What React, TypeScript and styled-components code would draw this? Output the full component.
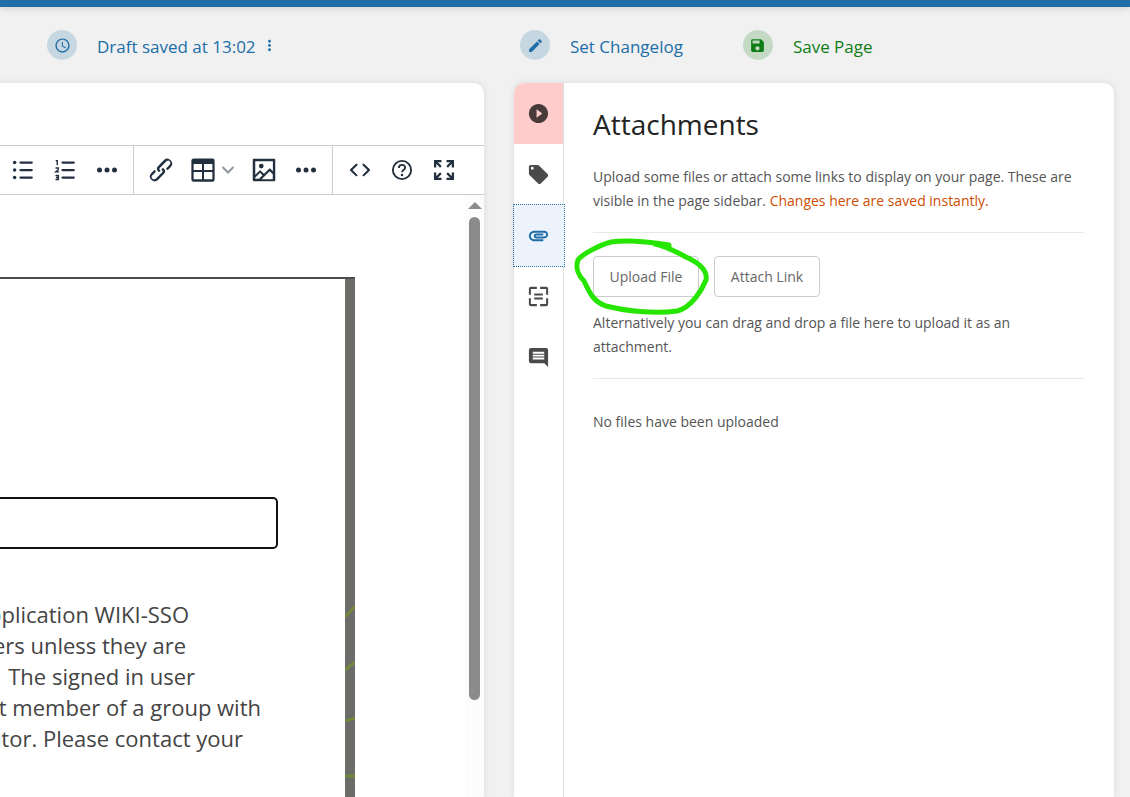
import React from "react";
import styled, { createGlobalStyle, css } from "styled-components";
import {
  MdSchedule,
  MdEdit,
  MdSave,
  MdMoreVert,
  MdPlayCircleFilled,
  MdLocalOffer,
  MdAttachment,
  MdComment,
} from "react-icons/md";

const GlobalStyle = createGlobalStyle`
  *, *::before, *::after { box-sizing: border-box; }
  body {
    margin: 0;
    background: #f1f1f1;
    color: #555;
    font-family: "Open Sans", "Noto Sans", sans-serif;
    font-size: 14px;
    line-height: 24px;
  }
  button, input { font: inherit; color: inherit; }
  button { background: none; border: 0; padding: 0; cursor: pointer; }
`;

const Page = styled.div`
  min-height: 100vh;
  display: flex;
  flex-direction: column;
  overflow: hidden;
`;

const TopBar = styled.header`
  height: 7px;
  flex: none;
  background: #206ea7;
  box-shadow: 0 0 8px rgba(0, 0, 0, 0.2);
`;

const columns = css`
  display: grid;
  grid-template-columns: minmax(0, 1fr) 600px;
  column-gap: 30px;
  padding-right: 16px;
`;

const ActionBar = styled.div`
  ${columns}
  height: 76px;
  flex: none;
`;

const ActionGroup = styled.div<{ $inset: number }>`
  display: flex;
  align-items: center;
  gap: 60px;
  padding-left: ${(p) => p.$inset}px;
`;

const Draft = styled.div`
  display: flex;
  align-items: center;
  gap: 4px;
`;

const Action = styled.button<{ $tone: "blue" | "green" }>`
  display: flex;
  align-items: center;
  gap: 20px;
  font-size: 17px;
  white-space: nowrap;
  color: ${(p) => (p.$tone === "blue" ? "#206ea7" : "#0f7d15")};
`;

const ActionLabel = styled.span`
  padding-top: 3px;
`;

const Bubble = styled.span<{ $tone: "blue" | "green" }>`
  display: grid;
  place-items: center;
  width: 30px;
  height: 30px;
  border-radius: 50%;
  background: ${(p) => (p.$tone === "blue" ? "#c7d7e2" : "#c4dac5")};
`;

const MoreButton = styled.button`
  display: grid;
  place-items: center;
  width: 20px;
  height: 24px;
  color: #206ea7;
`;

const Workspace = styled.main`
  ${columns}
  flex: 1;
`;

const Editor = styled.section`
  display: flex;
  flex-direction: column;
  background: #fff;
  border-top-right-radius: 10px;
  box-shadow: 0 0 7px rgba(0, 0, 0, 0.1);
`;

const TitleInput = styled.input`
  height: 62px;
  width: 100%;
  border: 0;
  outline: 0;
  padding: 0 20px;
  background: transparent;
  font-size: 28px;
`;

const Toolbar = styled.div`
  display: flex;
  height: 50px;
  border-top: 1px solid #ccc;
  border-bottom: 1px solid #ccc;
`;

const ToolGroup = styled.div<{ $first?: boolean; $last?: boolean }>`
  display: flex;
  align-items: center;
  padding: 0 5px 0 ${(p) => (p.$first ? 2 : 6)}px;
  border-right: ${(p) => (p.$last ? "0" : "1px solid #ccc")};
`;

const Tool = styled.button`
  display: grid;
  place-items: center;
  width: 42px;
  height: 42px;
  color: #222f3e;
`;

const ToolArrow = styled.button`
  display: grid;
  place-items: center start;
  width: 22px;
  height: 42px;
  margin-left: -3px;
  color: #8f969f;
`;

const EditArea = styled.div`
  flex: 1;
  display: flex;
`;

const Canvas = styled.div`
  flex: 1;
  min-width: 0;
  display: flex;
  padding-top: 82px;
`;

const Shot = styled.div`
  width: 355px;
  display: flex;
  border-top: 2px solid #4b4b4b;
`;

const Dialog = styled.div`
  flex: 1;
  min-width: 0;
  padding-top: 218px;
`;

const Field = styled.div`
  width: 278px;
  height: 52px;
  border: 2px solid #111;
  border-left: 0;
  border-radius: 0 5px 5px 0;
`;

const Message = styled.div`
  margin-top: 50px;
  font-size: 22px;
  line-height: 31px;
  color: #444;
`;

const Line = styled.div<{ $end: number }>`
  width: ${(p) => p.$end}px;
  display: flex;
  justify-content: flex-end;
  overflow: hidden;
  white-space: nowrap;
`;

const Backdrop = styled.div`
  width: 10px;
  background: #6c6c6a;
  overflow: hidden;
  padding-top: 321px;
`;

const Scrollbar = styled.div`
  width: 19px;
  display: flex;
  flex-direction: column;
  align-items: center;
  gap: 8px;
  padding-top: 7px;
  background: #fcfcfc;
`;

const ScrollArrow = styled.div`
  border: 7px solid transparent;
  border-top: 0;
  border-bottom: 7px solid #8b8b8b;
`;

const Thumb = styled.div`
  width: 11px;
  height: 483px;
  border-radius: 6px;
  background: #8b8b8b;
`;

const Sidebar = styled.aside`
  display: flex;
  background: #fff;
  border-radius: 10px 10px 0 0;
  box-shadow: 0 0 7px rgba(0, 0, 0, 0.1);
`;

const Tabs = styled.nav`
  width: 50px;
  flex: none;
  border-right: 1px solid #ddd;
`;

const Tab = styled.button<{ $kind?: "toggle" | "active" }>`
  display: grid;
  place-items: center;
  width: 49px;
  height: 61px;
  color: #4a4a4a;
  ${(p) =>
    p.$kind === "toggle" &&
    css`
      background: #ffcccc;
      color: #4a3b3b;
      border-top-left-radius: 10px;
    `}
  ${(p) =>
    p.$kind === "active" &&
    css`
      background: #edf3fa;
      color: #206ea7;
      outline: 1px dotted #206ea7;
      width: 50px;
      padding-right: 1px;
    `}
`;

const Panel = styled.div`
  flex: 1;
  min-width: 0;
  padding: 23px 30px 30px 29px;
`;

const Heading = styled.h1`
  margin: 0 0 23px;
  font-size: 28px;
  line-height: 36px;
  font-weight: 400;
  color: #222;
`;

const Text = styled.p`
  margin: 0;
`;

const Warning = styled.span`
  color: #cf4d03;
`;

const Rule = styled.hr<{ $roomy?: boolean }>`
  margin: 19px 0 ${(p) => (p.$roomy ? 31 : 23)}px;
  border: 0;
  border-top: 1px solid #e8e8e8;
`;

const Buttons = styled.div`
  position: relative;
  display: flex;
  gap: 15px;
  margin-bottom: 14px;
`;

const OutlineButton = styled.button`
  width: 106px;
  height: 41px;
  border: 1px solid #ccc;
  border-radius: 4px;
  color: #666;
  white-space: nowrap;
`;

const Scribble = styled.svg`
  position: absolute;
  left: -23px;
  top: -22px;
  pointer-events: none;
`;

const Glyph = ({ children, size = 30 }: { children: React.ReactNode; size?: number }) => (
  <svg width={size} height={size} viewBox="0 0 24 24" fill="currentColor" fillRule="evenodd" aria-hidden="true">
    {children}
  </svg>
);

const BulletIcon = () => (
  <Glyph>
    <path d="M10 6h9M10 12h9M10 18h9" stroke="currentColor" strokeWidth="1.8" strokeLinecap="round" />
    <circle cx="5.3" cy="6" r="1.4" />
    <circle cx="5.3" cy="12" r="1.4" />
    <circle cx="5.3" cy="18" r="1.4" />
  </Glyph>
);

const NumberIcon = () => (
  <Glyph>
    <path d="M10 6h9M10 12h9M10 18h9" stroke="currentColor" strokeWidth="1.8" strokeLinecap="round" />
    <path
      d="M4.6 4.6h1.2v3.6M4.4 10.4h2.2v1.4l-2 1.6h2.4M4.4 16.4h2.3v3.2H4.4M4.8 18h1.8"
      fill="none"
      stroke="currentColor"
      strokeWidth="1.1"
    />
  </Glyph>
);

const DotsIcon = () => (
  <Glyph>
    <circle cx="6" cy="12" r="2" />
    <circle cx="12" cy="12" r="2" />
    <circle cx="18" cy="12" r="2" />
  </Glyph>
);

const LinkIcon = () => (
  <Glyph>
    <path d="M6.2 12.3a1 1 0 0 1 1.4 1.4l-2 2a2 2 0 1 0 2.6 2.8l4.8-4.8a1 1 0 0 0 0-1.4 1 1 0 1 1 1.4-1.3 2.9 2.9 0 0 1 0 4L9.6 20a3.9 3.9 0 0 1-5.5-5.5l2-2Zm11.6-.6a1 1 0 0 1-1.4-1.4l2-2a2 2 0 1 0-2.6-2.8L11 10.3a1 1 0 0 0 0 1.4A1 1 0 1 1 9.6 13a2.9 2.9 0 0 1 0-4L14.4 4a3.9 3.9 0 0 1 5.5 5.5l-2 2Z" />
  </Glyph>
);

const TableIcon = () => (
  <Glyph>
    <path d="M4.5 2.8h15a1.8 1.8 0 0 1 1.8 1.8v14.9a1.8 1.8 0 0 1-1.8 1.8h-15a1.8 1.8 0 0 1-1.8-1.8V4.6a1.8 1.8 0 0 1 1.8-1.8ZM4.5 7.1v4.8h6.7V7.1Zm8.300 0v4.8h6.7V7.1ZM4.5 13.500v5.9h6.7v-5.9Zm8.300 0v5.9h6.7v-5.9Z" />
  </Glyph>
);

const ChevronIcon = () => (
  <svg width="14" height="14" viewBox="0 0 14 14" fill="none" stroke="currentColor" strokeWidth="2" aria-hidden="true">
    <path d="M1.500 4L7 9.500 12.500 4" />
  </svg>
);

const ImageIcon = () => (
  <Glyph>
    <path d="M5 15.700l3.300-3.200c.3-.3.7-.3 1 0L12 15l4.100-4c.3-.4.8-.4 1 0l2 1.900V5H5v10.700Zm0 2.100V19h3l2.800-2.900-2-2L5 17.900Zm14-2.500-2.500-2.400-6.400 6.500H19v-4.100ZM4 3h16c.6 0 1 .4 1 1v16c0 .6-.4 1-1 1H4a1 1 0 0 1-1-1V4c0-.6.4-1 1-1Z" />
    <circle cx="9.800" cy="8.800" r="1.900" />
  </Glyph>
);

const CodeIcon = () => (
  <Glyph>
    <path d="M9.8 15.7c.3.3.3.8 0 1-.3.4-.9.4-1.2 0l-4.4-4.1a.8.8 0 0 1 0-1.2l4.4-4.2c.3-.3.9-.3 1.2 0 .3.3.3.8 0 1.1L6 12l3.8 3.7ZM14.2 15.7c-.3.3-.3.8 0 1 .4.4.9.4 1.2 0l4.400-4.100c.3-.3.3-.9 0-1.200l-4.400-4.200a.8.8 0 0 0-1.200 0c-.3.3-.3.8 0 1.100L18 12l-3.800 3.700Z" />
  </Glyph>
);

const HelpIcon = () => (
  <Glyph>
    <circle cx="12" cy="12" r="7.300" fill="none" stroke="currentColor" strokeWidth="1.500" />
    <path d="M9.500 10.300c0-3.200 5-3.200 5-.2 0 1.900-2.500 1.800-2.500 3.700" fill="none" stroke="currentColor" strokeWidth="1.500" />
    <circle cx="12" cy="15.900" r="1" />
  </Glyph>
);

const FullscreenIcon = () => (
  <Glyph>
    <path
      d="M4.900 10V4.900H10M5 5l4.500 4.500M14 4.900h5.100V10M19 5l-4.500 4.500M4.900 14v5.100H10M5 19l4.500-4.500M14 19.100h5.100V14M19 19l-4.500-4.500"
      fill="none"
      stroke="currentColor"
      strokeWidth="1.800"
    />
  </Glyph>
);

const TemplateIcon = () => (
  <Glyph size={23}>
    <path
      d="M3 10.300V4a1 1 0 0 1 1-1h6.300M13.700 3H20a1 1 0 0 1 1 1v6.300M21 13.700V20a1 1 0 0 1-1 1h-6.300M10.300 21H4a1 1 0 0 1-1-1v-6.300M7.500 10h9M7.500 14.200h9"
      fill="none"
      stroke="currentColor"
      strokeWidth="2.100"
    />
  </Glyph>
);

const message = [
  { text: "application WIKI-SSO", end: 189 },
  { text: "users unless they are", end: 186 },
  { text: "The signed in user", end: 195 },
  { text: "direct member of a group with", end: 261 },
  { text: "administrator. Please contact your", end: 243 },
];

export default function App() {
  return (
    <Page>
      <GlobalStyle />
      <TopBar />
      <ActionBar>
        <ActionGroup $inset={47}>
          <Draft>
            <Action $tone="blue">
              <Bubble $tone="blue"><MdSchedule size={17} /></Bubble>
              <ActionLabel>Draft saved at 13:02</ActionLabel>
            </Action>
            <MoreButton aria-label="More draft options"><MdMoreVert size={17} /></MoreButton>
          </Draft>
        </ActionGroup>
        <ActionGroup $inset={6}>
          <Action $tone="blue">
            <Bubble $tone="blue"><MdEdit size={17} /></Bubble>
            <ActionLabel>Set Changelog</ActionLabel>
          </Action>
          <Action $tone="green">
            <Bubble $tone="green"><MdSave size={17} /></Bubble>
            <ActionLabel>Save Page</ActionLabel>
          </Action>
        </ActionGroup>
      </ActionBar>
      <Workspace>
        <Editor>
          <TitleInput aria-label="Page title" />
          <Toolbar>
            <ToolGroup $first>
              <Tool aria-label="Bullet list"><BulletIcon /></Tool>
              <Tool aria-label="Numbered list"><NumberIcon /></Tool>
              <Tool aria-label="More formatting"><DotsIcon /></Tool>
            </ToolGroup>
            <ToolGroup>
              <Tool aria-label="Insert link"><LinkIcon /></Tool>
              <Tool aria-label="Table"><TableIcon /></Tool>
              <ToolArrow aria-label="Table options"><ChevronIcon /></ToolArrow>
              <Tool aria-label="Insert image"><ImageIcon /></Tool>
              <Tool aria-label="More inserts"><DotsIcon /></Tool>
            </ToolGroup>
            <ToolGroup $last>
              <Tool aria-label="Source code"><CodeIcon /></Tool>
              <Tool aria-label="Help"><HelpIcon /></Tool>
              <Tool aria-label="Fullscreen"><FullscreenIcon /></Tool>
            </ToolGroup>
          </Toolbar>
          <EditArea>
            <Canvas>
              <Shot>
                <Dialog>
                  <Field />
                  <Message>
                    {message.map((l) => (
                      <Line key={l.text} $end={l.end}>{l.text}</Line>
                    ))}
                  </Message>
                </Dialog>
                <Backdrop>
                  <svg width="10" height="190" viewBox="0 0 10 190" fill="none" stroke="#73893f" strokeWidth="3" aria-hidden="true">
                    <path d="M0 17L10 6M0 70L10 62M0 121L10 118M0 176H10" />
                  </svg>
                </Backdrop>
              </Shot>
            </Canvas>
            <Scrollbar>
              <ScrollArrow />
              <Thumb />
            </Scrollbar>
          </EditArea>
        </Editor>
        <Sidebar>
          <Tabs>
            <Tab $kind="toggle" aria-label="Toggle sidebar"><MdPlayCircleFilled size={23} /></Tab>
            <Tab aria-label="Tags"><MdLocalOffer size={23} /></Tab>
            <Tab $kind="active" aria-label="Attachments"><MdAttachment size={23} /></Tab>
            <Tab aria-label="Templates"><TemplateIcon /></Tab>
            <Tab aria-label="Comments"><MdComment size={23} /></Tab>
          </Tabs>
          <Panel>
            <Heading>Attachments</Heading>
            <Text>
              Upload some files or attach some links to display on your page. These are visible in the page
              sidebar. <Warning>Changes here are saved instantly.</Warning>
            </Text>
            <Rule />
            <Buttons>
              <OutlineButton>Upload File</OutlineButton>
              <OutlineButton>Attach Link</OutlineButton>
              <Scribble width="144" height="84" viewBox="570 234 144 84" fill="none" stroke="#26e600" strokeWidth="5" strokeLinecap="round" strokeLinejoin="round" aria-hidden="true">
                <path d="M669 245C650 242 625 240 611 242C600 245 582 254 578 260C575 268 579 276 584 281C590 294 594 302 606 306C625 311 655 314 677 311C691 308 702 290 706 280C708 270 697 262 686 257C675 251 665 246 655 244L669 247" />
              </Scribble>
            </Buttons>
            <Text>Alternatively you can drag and drop a file here to upload it as an attachment.</Text>
            <Rule $roomy />
            <Text>No files have been uploaded</Text>
          </Panel>
        </Sidebar>
      </Workspace>
    </Page>
  );
}
